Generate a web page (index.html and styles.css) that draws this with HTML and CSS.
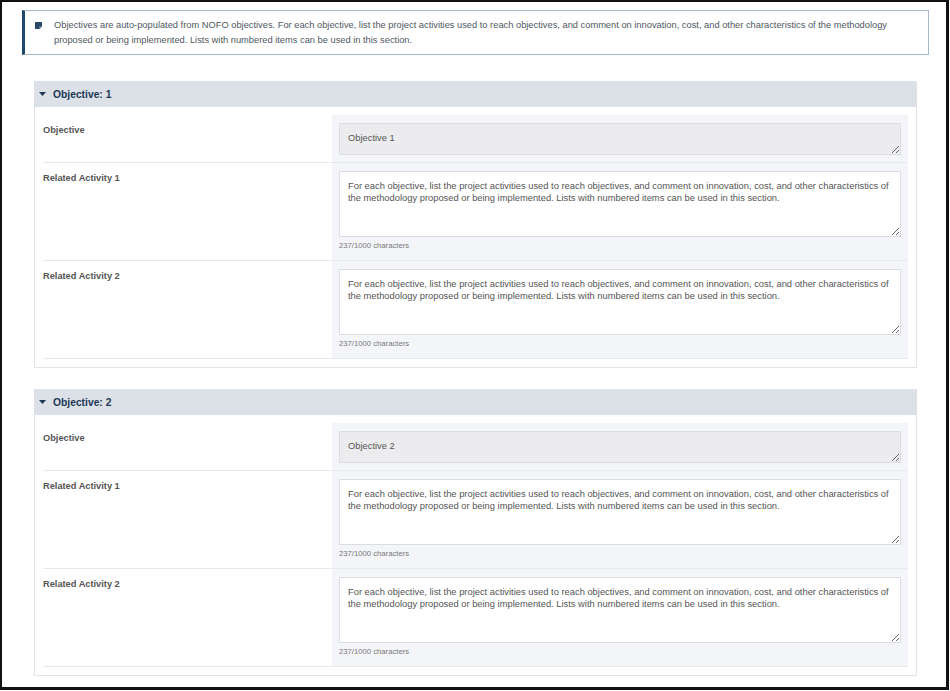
FILE: index.html
```html
<!DOCTYPE html>
<html lang="en">
<head>
    <meta charset="UTF-8">
    <meta name="viewport" content="width=device-width, initial-scale=1.0">
    <title>Objectives</title>
    <link rel="stylesheet" href="styles.css">
</head>
<body>
    <div class="frame">
        <div class="notice">
            <svg class="notice-icon" width="7" height="7" viewBox="0 0 7 7">
                <path d="M0 0H7V4.5L4.5 7H0Z" fill="#2a4868"/>
                <path d="M7 4.5L4.5 7V4.5Z" fill="#8ea3b8"/>
            </svg>
            <p>Objectives are auto-populated from NOFO objectives. For each objective, list the project activities used to reach objectives, and comment on innovation, cost, and other characteristics of the methodology proposed or being implemented. Lists with numbered items can be used in this section.</p>
        </div>

        <div class="sections">
            <div class="section">
                <div class="section-header">
                    <svg class="caret" width="7" height="4" viewBox="0 0 7 4"><path d="M0 0H7L3.5 4Z" fill="#1c3a58"/></svg>
                    <span>Objective: 1</span>
                </div>
                <div class="section-body">
                    <div class="row">
                        <div class="label">Objective</div>
                        <div class="value">
                            <textarea class="field readonly" readonly>Objective 1</textarea>
                        </div>
                    </div>
                    <div class="row">
                        <div class="label">Related Activity 1</div>
                        <div class="value">
                            <textarea class="field">For each objective, list the project activities used to reach objectives, and comment on innovation, cost, and other characteristics of the methodology proposed or being implemented. Lists with numbered items can be used in this section.</textarea>
                            <div class="count">237/1000 characters</div>
                        </div>
                    </div>
                    <div class="row">
                        <div class="label">Related Activity 2</div>
                        <div class="value">
                            <textarea class="field">For each objective, list the project activities used to reach objectives, and comment on innovation, cost, and other characteristics of the methodology proposed or being implemented. Lists with numbered items can be used in this section.</textarea>
                            <div class="count">237/1000 characters</div>
                        </div>
                    </div>
                </div>
            </div>

            <div class="section">
                <div class="section-header">
                    <svg class="caret" width="7" height="4" viewBox="0 0 7 4"><path d="M0 0H7L3.5 4Z" fill="#1c3a58"/></svg>
                    <span>Objective: 2</span>
                </div>
                <div class="section-body">
                    <div class="row">
                        <div class="label">Objective</div>
                        <div class="value">
                            <textarea class="field readonly" readonly>Objective 2</textarea>
                        </div>
                    </div>
                    <div class="row">
                        <div class="label">Related Activity 1</div>
                        <div class="value">
                            <textarea class="field">For each objective, list the project activities used to reach objectives, and comment on innovation, cost, and other characteristics of the methodology proposed or being implemented. Lists with numbered items can be used in this section.</textarea>
                            <div class="count">237/1000 characters</div>
                        </div>
                    </div>
                    <div class="row">
                        <div class="label">Related Activity 2</div>
                        <div class="value">
                            <textarea class="field">For each objective, list the project activities used to reach objectives, and comment on innovation, cost, and other characteristics of the methodology proposed or being implemented. Lists with numbered items can be used in this section.</textarea>
                            <div class="count">237/1000 characters</div>
                        </div>
                    </div>
                </div>
            </div>
        </div>
    </div>
</body>
</html>
```

FILE: styles.css
```css
body {
    margin: 0;
    font-family: "Liberation Sans", Arial, sans-serif;
    background-color: #fff;
    color: #555;
}

.frame {
    box-sizing: border-box;
    width: 949px;
    height: 690px;
    border-style: solid;
    border-color: #111;
    border-width: 2px 3px 3px 2px;
    padding: 8px 17px 0 20px;
    overflow: hidden;
}

.notice {
    display: flex;
    align-items: flex-start;
    border: 1px solid #a9b8c7;
    border-left: 3px solid #1f4a6e;
    padding: 7px 10px 7px 10px;
}

.notice-icon {
    flex: none;
    margin-top: 4px;
    margin-right: 12px;
}

.notice p {
    margin: 0;
    font-size: 9.3px;
    line-height: 14.5px;
    color: #4f5962;
}

.sections {
    margin: 26px 12px 0 12px;
}

.section {
    margin-bottom: 21px;
}

.section-header {
    display: flex;
    align-items: center;
    height: 26px;
    padding-left: 5px;
    background-color: #dce0e7;
    font-size: 10.3px;
    font-weight: bold;
    color: #1b3856;
}

.caret {
    margin-right: 7px;
}

.section-body {
    border: 1px solid #e3e4e6;
    border-top: none;
    padding: 8px;
}

.row {
    display: grid;
    grid-template-columns: 289px 1fr;
    border-bottom: 1px solid #e8e9ec;
}

.label {
    padding-top: 9px;
    font-size: 9.25px;
    line-height: 12px;
    font-weight: bold;
    color: #555;
}

.value {
    background-color: #f4f5f8;
    padding: 8px 7px 7px 7px;
}

.field {
    display: block;
    box-sizing: border-box;
    width: 100%;
    height: 66px;
    margin: 0;
    padding: 9px 8px 8px 8px;
    border: 1px solid #dcdde1;
    background-color: #fff;
    font-family: "Liberation Sans", Arial, sans-serif;
    font-size: 9.35px;
    line-height: 11.5px;
    color: #555;
    outline: none;
}

.field.readonly {
    height: 32px;
    background-color: #ececee;
}

.count {
    margin-top: 3px;
    margin-bottom: 1px;
    font-size: 7.7px;
    line-height: 12px;
    color: #777;
}
```
